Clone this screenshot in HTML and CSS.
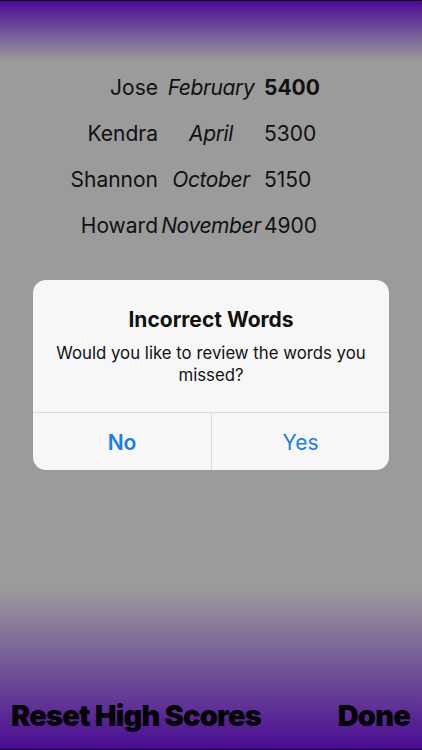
FILE: index.html
```html
<!DOCTYPE html>
<html lang="en">
<head>
<meta charset="utf-8">
<title>High Scores</title>
<link rel="stylesheet" href="styles.css">
</head>
<body>
<div class="screen">
  <div class="top-fade"></div>
  <div class="scores">
    <span class="name">Jose</span><span class="month">February</span><span class="score best">5400</span>
    <span class="name">Kendra</span><span class="month">April</span><span class="score">5300</span>
    <span class="name">Shannon</span><span class="month">October</span><span class="score">5150</span>
    <span class="name">Howard</span><span class="month">November</span><span class="score">4900</span>
  </div>
  <div class="spacer"></div>
  <div class="bottom">
    <span class="action">Reset High Scores</span>
    <span class="action">Done</span>
  </div>

  <div class="alert">
    <div class="alert-body">
      <div class="alert-title">Incorrect Words</div>
      <div class="alert-msg">Would you like to review the words you missed?</div>
    </div>
    <div class="alert-buttons">
      <div class="btn btn-no">No</div>
      <div class="btn">Yes</div>
    </div>
  </div>
</div>
</body>
</html>
```

FILE: styles.css
```css
html, body {
  margin: 0;
  padding: 0;
}
body {
  font-family: Inter, "Liberation Sans", sans-serif;
  background: #9b9b9b;
}
.screen {
  position: relative;
  width: 422px;
  height: 750px;
  box-sizing: border-box;
  border-top: 1px solid #141018;
  border-bottom: 1px solid #141018;
  background: #9b9b9b;
  display: flex;
  flex-direction: column;
  overflow: hidden;
}
.top-fade {
  height: 60px;
  flex: none;
  background: linear-gradient(#4a0b95, #9b9b9b);
}
.scores {
  display: grid;
  grid-template-columns: 158px 106px 1fr;
  grid-auto-rows: 46px;
  align-items: center;
  padding-top: 3px;
  color: #111;
  font-size: 21px;
}
.name {
  text-align: right;
}
.month {
  text-align: center;
  font-style: italic;
  white-space: nowrap;
  letter-spacing: -0.4px;
}
.best {
  font-weight: 700;
}
.spacer {
  flex: 1;
}
.bottom {
  height: 160px;
  flex: none;
  background: linear-gradient(#9b9b9b, #4a0b93);
  display: flex;
  justify-content: space-between;
  align-items: flex-end;
  padding: 0 12px 17px 11px;
  box-sizing: border-box;
}
.action {
  font-family: Inter, "Liberation Sans", sans-serif;
  font-weight: 900;
  font-size: 29px;
  letter-spacing: -0.8px;
  color: #050308;
  line-height: 32px;
}
.alert {
  position: absolute;
  left: 33px;
  top: 279px;
  width: 356px;
  background: #f7f7f7;
  border-radius: 13px;
  overflow: hidden;
  text-align: center;
  color: #111;
}
.alert-body {
  padding: 26px 20px 26px;
}
.alert-title {
  font-size: 21px;
  font-weight: 700;
  line-height: 28px;
}
.alert-msg {
  margin-top: 8px;
  font-size: 16.8px;
  line-height: 22px;
}
.alert-buttons {
  display: grid;
  grid-template-columns: 1fr 1fr;
  border-top: 1px solid #dcdcdc;
}
.btn {
  height: 57px;
  line-height: 60px;
  font-size: 21px;
  color: #1a7fe3;
}
.btn + .btn {
  border-left: 1px solid #dcdcdc;
}
.btn-no {
  font-weight: 600;
}
```
